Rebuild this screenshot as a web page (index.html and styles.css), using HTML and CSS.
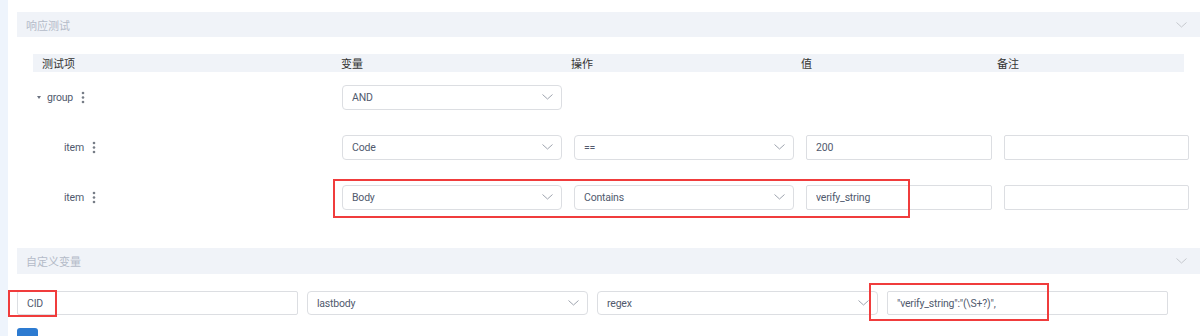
FILE: index.html
```html
<!DOCTYPE html>
<html lang="zh-CN">
<head>
  <meta charset="UTF-8">
  <title>响应测试</title>
  <link rel="stylesheet" href="styles.css">
</head>
<body>
  <div class="layout">
    <div class="side"></div>
    <div class="main">
      <div class="panel-head">
        <span>响应测试</span>
        <svg class="chev" width="11" height="6" viewBox="0 0 11 6"><path d="M0.5 0.5 L5.5 5 L10.5 0.5" fill="none" stroke="#c5c8ce" stroke-width="1"/></svg>
      </div>

      <div class="tests">
        <div class="thead">
          <span>测试项</span>
          <span>变量</span>
          <span>操作</span>
          <span>值</span>
          <span>备注</span>
        </div>

        <div class="trow">
          <div class="label">
            <span class="caret"></span>
            <span>group</span>
            <svg class="kebab" width="4" height="13" viewBox="0 0 4 13"><circle cx="2" cy="2" r="1.3"/><circle cx="2" cy="6.5" r="1.3"/><circle cx="2" cy="11" r="1.3"/></svg>
          </div>
          <div class="select w-var"><span>AND</span><svg width="11" height="6" viewBox="0 0 11 6"><path d="M0.5 0.5 L5.5 5 L10.5 0.5" fill="none" stroke="#9ea4ae" stroke-width="1"/></svg></div>
        </div>

        <div class="trow">
          <div class="label item">
            <span>item</span>
            <svg class="kebab" width="4" height="13" viewBox="0 0 4 13"><circle cx="2" cy="2" r="1.3"/><circle cx="2" cy="6.5" r="1.3"/><circle cx="2" cy="11" r="1.3"/></svg>
          </div>
          <div class="select w-var"><span>Code</span><svg width="11" height="6" viewBox="0 0 11 6"><path d="M0.5 0.5 L5.5 5 L10.5 0.5" fill="none" stroke="#9ea4ae" stroke-width="1"/></svg></div>
          <div class="select w-op"><span>==</span><svg width="11" height="6" viewBox="0 0 11 6"><path d="M0.5 0.5 L5.5 5 L10.5 0.5" fill="none" stroke="#9ea4ae" stroke-width="1"/></svg></div>
          <input class="field w-val" type="text" value="200">
          <input class="field w-note" type="text" value="">
        </div>

        <div class="trow">
          <div class="label item">
            <span>item</span>
            <svg class="kebab" width="4" height="13" viewBox="0 0 4 13"><circle cx="2" cy="2" r="1.3"/><circle cx="2" cy="6.5" r="1.3"/><circle cx="2" cy="11" r="1.3"/></svg>
          </div>
          <div class="select w-var"><span>Body</span><svg width="11" height="6" viewBox="0 0 11 6"><path d="M0.5 0.5 L5.5 5 L10.5 0.5" fill="none" stroke="#9ea4ae" stroke-width="1"/></svg></div>
          <div class="select w-op"><span>Contains</span><svg width="11" height="6" viewBox="0 0 11 6"><path d="M0.5 0.5 L5.5 5 L10.5 0.5" fill="none" stroke="#9ea4ae" stroke-width="1"/></svg></div>
          <input class="field w-val" type="text" value="verify_string">
          <input class="field w-note" type="text" value="">
        </div>
      </div>

      <div class="panel-head second">
        <span>自定义变量</span>
        <svg class="chev" width="11" height="6" viewBox="0 0 11 6"><path d="M0.5 0.5 L5.5 5 L10.5 0.5" fill="none" stroke="#c5c8ce" stroke-width="1"/></svg>
      </div>

      <div class="vars">
        <input class="field" type="text" value="CID">
        <div class="select"><span>lastbody</span><svg width="11" height="6" viewBox="0 0 11 6"><path d="M0.5 0.5 L5.5 5 L10.5 0.5" fill="none" stroke="#9ea4ae" stroke-width="1"/></svg></div>
        <div class="select"><span>regex</span><svg width="11" height="6" viewBox="0 0 11 6"><path d="M0.5 0.5 L5.5 5 L10.5 0.5" fill="none" stroke="#9ea4ae" stroke-width="1"/></svg></div>
        <input class="field" type="text" value="&quot;verify_string&quot;:&quot;(\S+?)&quot;,">
      </div>

      <button class="add"></button>
    </div>
  </div>

  <!-- annotation boxes drawn over the form -->
  <div class="mark mark-row"></div>
  <div class="mark mark-cid"></div>
  <div class="mark mark-regex"></div>
</body>
</html>
```

FILE: styles.css
```css
body {
  margin: 0;
  height: 336px;
  overflow: hidden;
  position: relative;
  font-family: Roboto, "Noto Sans CJK SC", sans-serif;
  font-size: 11px;
  color: #515a6e;
  background: #fff;
}

.layout {
  display: flex;
  height: 336px;
}

.side {
  width: 8px;
  background: #eef4fc;
}

.main {
  flex: 1;
  padding: 12px 0 0 9px;
}

.panel-head {
  height: 25px;
  background: #f0f3f8;
  display: flex;
  align-items: center;
  justify-content: space-between;
  padding: 0 13px 0 9px;
  color: #b4bbc8;
}

.panel-head.second {
  height: 26px;
  margin-top: 26px;
}

.tests {
  margin: 17px 0 0 16px;
}

.thead {
  width: 1142px;
  height: 18px;
  background: #f0f3f8;
  display: grid;
  grid-template-columns: 299px 230px 230px 196px 1fr;
  align-items: center;
  padding-left: 9px;
  color: #333;
}

.trow {
  height: 50px;
  display: flex;
  align-items: center;
  gap: 12px;
}

.label {
  width: 293px;
  display: flex;
  align-items: center;
  padding-left: 4px;
  font-size: 10.5px;
  letter-spacing: -0.2px;
}

.label.item {
  padding-left: 31px;
  width: 266px;
}

.caret {
  width: 0;
  height: 0;
  border-left: 2.5px solid transparent;
  border-right: 2.5px solid transparent;
  border-top: 3.5px solid #6b7280;
  margin-right: 6px;
}

.kebab {
  margin-left: 8px;
  fill: #777d87;
}

.select, .field {
  box-sizing: border-box;
  height: 25px;
  border: 1px solid #dcdee2;
  background: #fff;
  font-family: inherit;
  font-size: 10.5px;
  letter-spacing: -0.2px;
  color: #515a6e;
}

.select {
  border-radius: 4px;
  display: flex;
  align-items: center;
  justify-content: space-between;
  padding: 0 8px 0 9px;
}

.field {
  border-radius: 2px;
  padding: 0 9px;
  outline: none;
}

.w-var { width: 220px; }
.w-op { width: 220px; }
.w-val { width: 186px; }
.w-note { width: 185px; }

.vars {
  margin-top: 17px;
  width: 1151px;
  display: grid;
  grid-template-columns: repeat(4, 1fr);
  gap: 9px;
}

.vars .select, .vars .field {
  height: 24px;
}

.add {
  display: block;
  margin-top: 13px;
  width: 21px;
  height: 24px;
  border: none;
  border-radius: 3px;
  background: #2d7bd1;
}

.mark {
  position: absolute;
  border: 2px solid #f03c3c;
  box-sizing: border-box;
}

.mark-row {
  left: 333px;
  top: 179px;
  width: 577px;
  height: 39px;
}

.mark-cid {
  left: 8px;
  top: 290px;
  width: 49px;
  height: 27px;
}

.mark-regex {
  left: 869px;
  top: 283px;
  width: 180px;
  height: 38px;
}
```
